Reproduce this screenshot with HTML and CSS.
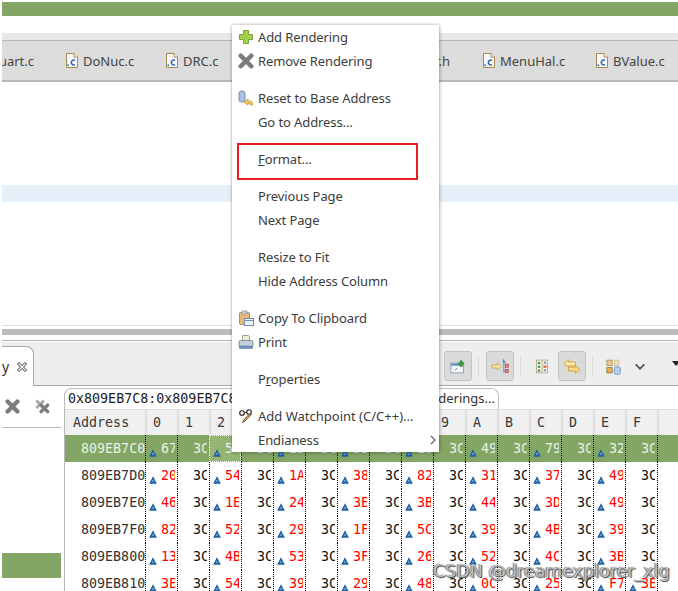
FILE: index.html
```html
<!DOCTYPE html>
<html lang="en">
<head>
<meta charset="utf-8">
<title>Memory rendering menu</title>
<link rel="stylesheet" href="styles.css">
</head>
<body>
<svg class="defs" width="0" height="0" aria-hidden="true">
  <symbol id="file-c" viewBox="0 0 12 15">
    <path d="M.5.5h7.500l3.500 3.500v10.500h-11z" fill="#f4f8fc" stroke="#a58a4c"/>
    <path d="M8 .5v3.500h3.500" fill="#fff" stroke="#a58a4c"/>
    <rect x="1.500" y="11.500" width="1.500" height="1.500" fill="#2a62a5"/>
    <path d="M9 7.300a2.500 2.500 0 1 0 0 4.400" fill="none" stroke="#2a62a5" stroke-width="1.500"/>
  </symbol>
  <symbol id="tri" viewBox="0 0 8 8">
    <path d="M4 .2 7.900 7.800H.1z" fill="#1f62a4"/>
    <path d="M4 3.400 5.100 5.600H2.900z" fill="#a9c6e2"/>
  </symbol>
  <symbol id="x-gray" viewBox="0 0 14 14">
    <path d="M2.400 2.400 11.600 11.600M11.600 2.400 2.400 11.600" stroke="#7b7b7b" stroke-width="4" stroke-linecap="round"/>
  </symbol>
</svg>

<div class="app">
  <div class="title-bar"></div>

  <div class="tabstrip">
    <div class="tab tab-first"><span class="tab-label">Guart.c</span></div>
    <div class="tab"><svg class="file-icon"><use href="#file-c"/></svg><span class="tab-label">DoNuc.c</span></div>
    <div class="tab"><svg class="file-icon"><use href="#file-c"/></svg><span class="tab-label">DRC.c</span></div>
    <div class="tab tab-hidden"><svg class="file-icon"><use href="#file-c"/></svg><span class="tab-label">Some.c</span></div>
    <div class="tab tab-clipped"><span class="tab-label">Timer.h</span></div>
    <div class="tab"><svg class="file-icon"><use href="#file-c"/></svg><span class="tab-label">MenuHal.c</span></div>
    <div class="tab"><svg class="file-icon"><use href="#file-c"/></svg><span class="tab-label">BValue.c</span></div>
  </div>

  <div class="editor"><div class="current-line"></div></div>

  <div class="sash"><div class="sash-bar"></div></div>

  <div class="view-head">
    <div class="view-tab">
      <span class="view-title">y</span>
      <svg class="close-icon" viewBox="0 0 12 12"><path d="M1.500 3 3 1.500 6 4.500 9 1.500 10.500 3 7.500 6 10.500 9 9 10.500 6 7.500 3 10.500 1.500 9 4.500 6z" fill="#fff" stroke="#333"/></svg>
    </div>
    <div class="view-tools">
      <div class="tool tool-on">
        <svg class="tool-icon" viewBox="0 0 24 22"><rect x="2.500" y="6.500" width="17" height="13" fill="#f3f6f8" stroke="#7c8a92"/><rect x="3" y="7" width="16" height="3" fill="#5d93c8"/><path d="M16 2l5 5-2 1-1 3-2 1-5-5 2-1 2-3z" fill="#3f9a3f"/><path d="M11 13l-3 3" stroke="#3f7a3f"/></svg>
      </div>
      <span class="tool-sep"></span>
      <div class="tool tool-on">
        <svg class="tool-icon" viewBox="0 0 24 22"><path d="M1.500 9h7V6l5 5-5 5v-3h-7z" fill="#f6e6a8" stroke="#c8a03c"/><path d="M17 1v18M17 6h3M17 17h3" stroke="#4a7fb0" fill="none"/><path d="M15 5l2-3 2 3z" fill="#4a7fb0"/><rect x="19" y="8" width="4" height="4" fill="#e68d8d" stroke="#b44"/><rect x="19" y="15" width="4" height="4" fill="#e68d8d" stroke="#b44"/></svg>
      </div>
      <span class="tool-sep"></span>
      <div class="tool">
        <svg class="tool-icon" viewBox="0 0 24 22"><rect x="4.500" y="2.500" width="15" height="17" fill="#f4f2e4" stroke="#a8a078"/><path d="M12 3v16" stroke="#a8a078"/><rect x="6.500" y="5" width="3" height="3" fill="#3f9a5f"/><rect x="6.500" y="10" width="3" height="3" fill="#3f9a5f"/><rect x="6.500" y="15" width="3" height="3" fill="#3f9a5f"/><path d="M14 7l2-3 2 3zM14 15l2 3 2-3z" fill="#4a7fb0"/><rect x="14" y="9.500" width="4" height="3.500" fill="#e86a5a"/></svg>
      </div>
      <div class="tool tool-on tool-push">
        <svg class="tool-icon" viewBox="0 0 24 22"><path d="M1.500 7l6-5v3h9v5h-9v2z" fill="#fbe9b0" stroke="#cf9414"/><path d="M22.500 15l-6 5v-3h-9v-5h9v-2z" fill="#fbdb84" stroke="#cf9414"/></svg>
      </div>
      <span class="tool-sep"></span>
      <div class="tool">
        <svg class="tool-icon" viewBox="0 0 24 22"><rect x="2.500" y="2.500" width="7" height="7" fill="#f1c986" stroke="#9c8a5c"/><rect x="12.500" y="2.500" width="6" height="7" fill="#f1dfb4" stroke="#c8bc94"/><rect x="2.500" y="12.500" width="7" height="7" fill="#efb14c" stroke="#7c6a3c"/><rect x="12.500" y="11.500" width="8" height="10" rx="2.500" fill="#b7cfe9" stroke="#5d88b9"/></svg>
      </div>
      <svg class="chevron" viewBox="0 0 12 8"><path d="M1 1.500 6 6.500 11 1.500" fill="none" stroke="#555" stroke-width="2"/></svg>
      <svg class="view-menu" viewBox="0 0 8 5"><path d="M0 0h8L4 5z" fill="#222"/></svg>
    </div>
  </div>

  <div class="lower">
    <div class="side">
      <div class="side-tools">
        <svg class="side-icon"><use href="#x-gray"/></svg>
        <svg class="side-icon" viewBox="0 0 16 16"><path d="M1.500 1.500 9.500 9.500M9.500 1.500 1.500 9.500" stroke="#a8a8a8" stroke-width="3" fill="none"/><path d="M6.500 6.500 13.500 13.500M13.500 6.500 6.500 13.500" stroke="#7b7b7b" stroke-width="3.600" stroke-linecap="round"/></svg>
      </div>
      <div class="side-selected"></div>
    </div>

    <div class="memory">
      <div class="mem-tabs">
        <div class="mem-tab"><span class="mono">0x809EB7C8:0x809EB7C8 &lt;Traditional&gt;</span></div>
        <div class="mem-new">New Renderings...</div>
      </div>

      <div class="row head">
        <span class="h addr">Address</span><span class="h">0</span><span class="h">1</span><span class="h">2</span><span class="h">3</span><span class="h">4</span><span class="h">5</span><span class="h">6</span><span class="h">7</span><span class="h">8</span><span class="h">9</span><span class="h">A</span><span class="h">B</span><span class="h">C</span><span class="h">D</span><span class="h">E</span><span class="h">F</span><span class="h h-end"></span>
      </div>

      <div class="row sel">
        <span class="a">809EB7C0</span>
        <span class="c"><svg class="t"><use href="#tri"/></svg><b>67</b></span><span class="c"><b>3C</b></span>
        <span class="c cur"><svg class="t"><use href="#tri"/></svg><b>54</b></span><span class="c"><b>3C</b></span>
        <span class="c"><svg class="t"><use href="#tri"/></svg><b>23</b></span><span class="c"><b>3C</b></span>
        <span class="c"><svg class="t"><use href="#tri"/></svg><b>33</b></span><span class="c"><b>3C</b></span>
        <span class="c"><svg class="t"><use href="#tri"/></svg><b>18</b></span><span class="c"><b>3C</b></span>
        <span class="c"><svg class="t"><use href="#tri"/></svg><b>49</b></span><span class="c"><b>3C</b></span>
        <span class="c"><svg class="t"><use href="#tri"/></svg><b>79</b></span><span class="c"><b>3C</b></span>
        <span class="c"><svg class="t"><use href="#tri"/></svg><b>32</b></span><span class="c"><b>3C</b></span>
      </div>
      <div class="row">
        <span class="a">809EB7D0</span>
        <span class="c v"><svg class="t"><use href="#tri"/></svg><b>20</b></span><span class="c"><b>3C</b></span>
        <span class="c v"><svg class="t"><use href="#tri"/></svg><b>54</b></span><span class="c"><b>3C</b></span>
        <span class="c v"><svg class="t"><use href="#tri"/></svg><b>1A</b></span><span class="c"><b>3C</b></span>
        <span class="c v"><svg class="t"><use href="#tri"/></svg><b>38</b></span><span class="c"><b>3C</b></span>
        <span class="c v"><svg class="t"><use href="#tri"/></svg><b>82</b></span><span class="c"><b>3C</b></span>
        <span class="c v"><svg class="t"><use href="#tri"/></svg><b>31</b></span><span class="c"><b>3C</b></span>
        <span class="c v"><svg class="t"><use href="#tri"/></svg><b>37</b></span><span class="c"><b>3C</b></span>
        <span class="c v"><svg class="t"><use href="#tri"/></svg><b>49</b></span><span class="c"><b>3C</b></span>
      </div>
      <div class="row">
        <span class="a">809EB7E0</span>
        <span class="c v"><svg class="t"><use href="#tri"/></svg><b>46</b></span><span class="c"><b>3C</b></span>
        <span class="c v"><svg class="t"><use href="#tri"/></svg><b>1E</b></span><span class="c"><b>3C</b></span>
        <span class="c v"><svg class="t"><use href="#tri"/></svg><b>24</b></span><span class="c"><b>3C</b></span>
        <span class="c v"><svg class="t"><use href="#tri"/></svg><b>3E</b></span><span class="c"><b>3C</b></span>
        <span class="c v"><svg class="t"><use href="#tri"/></svg><b>3B</b></span><span class="c"><b>3C</b></span>
        <span class="c v"><svg class="t"><use href="#tri"/></svg><b>44</b></span><span class="c"><b>3C</b></span>
        <span class="c v"><svg class="t"><use href="#tri"/></svg><b>3D</b></span><span class="c"><b>3C</b></span>
        <span class="c v"><svg class="t"><use href="#tri"/></svg><b>49</b></span><span class="c"><b>3C</b></span>
      </div>
      <div class="row">
        <span class="a">809EB7F0</span>
        <span class="c v"><svg class="t"><use href="#tri"/></svg><b>82</b></span><span class="c"><b>3C</b></span>
        <span class="c v"><svg class="t"><use href="#tri"/></svg><b>52</b></span><span class="c"><b>3C</b></span>
        <span class="c v"><svg class="t"><use href="#tri"/></svg><b>29</b></span><span class="c"><b>3C</b></span>
        <span class="c v"><svg class="t"><use href="#tri"/></svg><b>1F</b></span><span class="c"><b>3C</b></span>
        <span class="c v"><svg class="t"><use href="#tri"/></svg><b>5C</b></span><span class="c"><b>3C</b></span>
        <span class="c v"><svg class="t"><use href="#tri"/></svg><b>39</b></span><span class="c"><b>3C</b></span>
        <span class="c v"><svg class="t"><use href="#tri"/></svg><b>4B</b></span><span class="c"><b>3C</b></span>
        <span class="c v"><svg class="t"><use href="#tri"/></svg><b>39</b></span><span class="c"><b>3C</b></span>
      </div>
      <div class="row">
        <span class="a">809EB800</span>
        <span class="c v"><svg class="t"><use href="#tri"/></svg><b>13</b></span><span class="c"><b>3C</b></span>
        <span class="c v"><svg class="t"><use href="#tri"/></svg><b>4B</b></span><span class="c"><b>3C</b></span>
        <span class="c v"><svg class="t"><use href="#tri"/></svg><b>53</b></span><span class="c"><b>3C</b></span>
        <span class="c v"><svg class="t"><use href="#tri"/></svg><b>3F</b></span><span class="c"><b>3C</b></span>
        <span class="c v"><svg class="t"><use href="#tri"/></svg><b>26</b></span><span class="c"><b>3C</b></span>
        <span class="c v"><svg class="t"><use href="#tri"/></svg><b>52</b></span><span class="c"><b>3C</b></span>
        <span class="c v"><svg class="t"><use href="#tri"/></svg><b>4C</b></span><span class="c"><b>3C</b></span>
        <span class="c v"><svg class="t"><use href="#tri"/></svg><b>3B</b></span><span class="c"><b>3C</b></span>
      </div>
      <div class="row">
        <span class="a">809EB810</span>
        <span class="c v"><svg class="t"><use href="#tri"/></svg><b>3E</b></span><span class="c"><b>3C</b></span>
        <span class="c v"><svg class="t"><use href="#tri"/></svg><b>54</b></span><span class="c"><b>3C</b></span>
        <span class="c v"><svg class="t"><use href="#tri"/></svg><b>39</b></span><span class="c"><b>3C</b></span>
        <span class="c v"><svg class="t"><use href="#tri"/></svg><b>29</b></span><span class="c"><b>3C</b></span>
        <span class="c v"><svg class="t"><use href="#tri"/></svg><b>48</b></span><span class="c"><b>3C</b></span>
        <span class="c v"><svg class="t"><use href="#tri"/></svg><b>0C</b></span><span class="c"><b>3C</b></span>
        <span class="c v"><svg class="t"><use href="#tri"/></svg><b>25</b></span><span class="c"><b>3C</b></span>
        <span class="c v"><svg class="t"><use href="#tri"/></svg><b>F7</b></span><span class="c v"><svg class="t"><use href="#tri"/></svg><b>3E</b></span>
      </div>
    </div>
  </div>
</div>

<div class="menu">
  <div class="item"><svg class="mi" viewBox="0 0 16 16"><path d="M5.500 1.500h5v4h4v5h-4v4h-5v-4h-4v-5h4z" fill="#a3d04e" stroke="#7da33c"/></svg><span>Add Rendering</span></div>
  <div class="item"><svg class="mi"><use href="#x-gray"/></svg><span>Remove Rendering</span></div>
  <div class="gap"></div>
  <div class="item"><svg class="mi" viewBox="0 0 16 16"><rect x="1" y="1" width="6" height="11" rx="2.500" fill="#a9c0e0" stroke="#6f8cb5"/><path d="M6 12l4-3v2h3q2 1 1.500 4h-2q0-2-2.500-2v2z" fill="#f4c95c" stroke="#c99a2e" stroke-width=".8"/></svg><span>Reset to Base Address</span></div>
  <div class="item"><span class="noicon">Go to Address...</span></div>
  <div class="gap"></div>
  <div class="item"><span class="noicon"><u>F</u>ormat...</span></div>
  <div class="gap"></div>
  <div class="item"><span class="noicon">Previous Page</span></div>
  <div class="item"><span class="noicon">Next Page</span></div>
  <div class="gap"></div>
  <div class="item"><span class="noicon">Resize to Fit</span></div>
  <div class="item"><span class="noicon">Hide Address Column</span></div>
  <div class="gap"></div>
  <div class="item"><svg class="mi" viewBox="0 0 16 16"><rect x="1.500" y="2.500" width="10" height="12" rx="1" fill="#e8b877" stroke="#b98c52"/><rect x="4" y="1" width="5" height="3" fill="#c9d3dc" stroke="#8796a3" stroke-width=".7"/><rect x="6.500" y="8.500" width="9" height="7" fill="#eaf1f8" stroke="#6f8fb2"/><path d="M7 10.500h8" stroke="#6f8fb2"/></svg><span>Copy To Clipboard</span></div>
  <div class="item"><svg class="mi" viewBox="0 0 16 16"><path d="M4.500 1.500h6l1 1.500v4h-7z" fill="#f3ecd8" stroke="#a7a08a"/><rect x="1" y="6.500" width="14" height="6" rx="1.500" fill="#c4cfdb" stroke="#7d8da0"/><rect x="1.500" y="12" width="13" height="2.500" fill="#6f93bd" stroke="#5d7fa8" stroke-width=".6"/></svg><span>Print</span></div>
  <div class="gap"></div>
  <div class="item"><span class="noicon">P<u>r</u>operties</span></div>
  <div class="gap"></div>
  <div class="item"><svg class="mi" viewBox="0 0 16 16"><circle cx="4" cy="5" r="2.300" fill="none" stroke="#222" stroke-width="1.100"/><circle cx="11" cy="4" r="2.300" fill="none" stroke="#222" stroke-width="1.100"/><path d="M6 5l3-1" stroke="#222"/><path d="M13.500 6.500 7 13l-2.500 1.500L5.500 12 12 5.500z" fill="#e8a34c" stroke="#4a3a20" stroke-width=".8"/></svg><span class="wide">Add Watchpoint (C/C++)...</span></div>
  <div class="item item-sub"><span class="noicon">Endianess</span><svg class="sub-arrow" viewBox="0 0 6 10"><path d="M1 1l4 4-4 4" fill="none" stroke="#666" stroke-width="1.300"/></svg></div>
  <div class="highlight"></div>
</div>

<div class="watermark">CSDN @dreamexplorer_xlg</div>
</body>
</html>
```
FILE: styles.css
```css
* { box-sizing: border-box; }
html, body { margin: 0; height: 591px; overflow: hidden; background: #fff; }
body { position: relative; font-family: "Noto Sans", sans-serif; font-size: 13px; color: #3c3c3c; }
.defs { position: absolute; }
.app { width: 678px; height: 591px; padding: 2px 0 0 2px; overflow: hidden; display: flex; flex-direction: column; }

.title-bar { height: 14px; background: #84a665; flex: none; margin-bottom: 17px; }

.tabstrip { height: 49px; flex: none; display: flex; align-items: center; padding-top: 8px; background: linear-gradient(#e9e9e9 0 7px, #b4b4b4 7px 8px, #dcdcdc 8px); border-bottom: 2px solid #b9b9b9; overflow: hidden; white-space: nowrap; }
.tab { flex: none; display: flex; align-items: center; gap: 5px; color: #444; }
.tab-first { width: 72px; margin-left: -8px; justify-content: flex-end; padding-right: 32px; }
.file-icon { width: 12px; height: 15px; flex: none; }
.tab:nth-child(2) { width: 100px; }
.tab:nth-child(3) { width: 100px; }
.tab-hidden { width: 100px; }
.tab-clipped { width: 117px; justify-content: flex-end; padding-right: 33px; }
.tab:nth-child(6) { width: 113px; }

.editor { height: 243px; flex: none; padding-top: 103px; }
.current-line { height: 17px; background: #e6f0fb; }

.sash { height: 15px; flex: none; border-top: 1px solid #e0e0e0; padding-top: 3px; }
.sash-bar { height: 6px; background: #bcbcbc; }

.view-head { height: 46px; flex: none; display: flex; align-items: flex-end; background: #eeeeee; border-top: 1px solid #b0b0b0; border-bottom: 1px solid #a8a8a8; box-shadow: inset 0 1px 0 #fff; }
.view-tab { width: 32px; height: 40px; margin-bottom: -1px; background: #fff; border: 1px solid #a8a8a8; border-width: 1px 1px 0 0; border-top-right-radius: 8px; display: flex; align-items: center; gap: 7px; color: #333; font-size: 14px; flex: none; }
.close-icon { width: 12px; height: 12px; flex: none; }
.view-tools { flex: 1; display: flex; align-items: center; height: 44px; padding: 6px 0 0 410px; }
.tool { width: 28px; height: 30px; flex: none; display: flex; align-items: center; justify-content: center; border: 1px solid transparent; border-radius: 3px; }
.tool-on { background: #dadada; border-color: #c2c2c2; }
.tool-push { margin-left: 2px; }
.tool-icon { width: 18px; height: 17px; }
.tool-sep { width: 1px; height: 20px; margin: 0 7px 0 6px; background: #dcdcdc; flex: none; }
.chevron { width: 12px; height: 7px; margin-left: 6px; flex: none; }
.view-menu { width: 8px; height: 5px; margin-left: 26px; margin-bottom: 6px; flex: none; }

.lower { flex: 1; display: flex; min-height: 0; }
.side { width: 59px; flex: none; margin-right: 3px; }
.side-tools { height: 42px; border-bottom: 1px solid #b8b8b8; display: flex; align-items: center; gap: 15px; padding-left: 3px; }
.side-icon { width: 15px; height: 15px; flex: none; }
.side-selected { height: 25px; margin-top: 125px; background: #84a665; }

.memory { flex: 1; margin-top: 2px; min-width: 0; border-left: 1px solid #b8b8b8; border-image: linear-gradient(transparent 6px, #b8b8b8 6px) 1; }
.mem-tabs { height: 21px; margin-left: -1px; display: flex; justify-content: space-between; width: 435px; background: #fff; border: 1px solid #bdbdbd; border-bottom: 0; border-radius: 7px 8px 0 0; padding: 0 3px; line-height: 19px; white-space: nowrap; overflow: hidden; color: #222; }
.mono { font-family: "DejaVu Sans Mono", monospace; font-size: 13.330px; }
.mem-new { color: #333; background: #fff; padding-left: 3px; }

.row { height: 27px; display: flex; align-items: center; font-family: "DejaVu Sans Mono", monospace; font-size: 13.330px; color: #333; white-space: nowrap; }
.head { height: 26px; background: #f0f0f0; border-top: 1px solid #dcdcdc; color: #3a3a3a; }
.h { width: 32px; height: 25px; line-height: 25px; padding-left: 6px; border-left: 2px solid #dedede; flex: none; }
.h.addr { width: 80px; padding-left: 8px; border-left: 0; }
.a { width: 80px; padding-left: 16px; flex: none; }
.c { width: 32px; height: 27px; flex: none; display: block; position: relative; border-left: 1px dotted #000; overflow: hidden; line-height: 27px; }
.c:nth-child(17) { border-right: 1px dotted #000; width: 33px; }
.c b { font-weight: 400; position: absolute; left: 15px; width: 14px; overflow: hidden; color: #111; }
.c.v b { color: #f00; }
.t { position: absolute; left: 3px; top: 14px; width: 8px; height: 8px; }
.sel { background: #84a665; color: #e8f2e0; }
.sel .c b { color: #e8f2e0; }
.sel .cur { background: #95b575; outline: 1px dotted #fff; outline-offset: -1px; }

.menu { position: absolute; left: 232px; top: 25px; width: 207px; background: #fff; box-shadow: 0 0 3px rgba(0,0,0,.3), 1px 1px 4px rgba(0,0,0,.15); color: #3c3c3c; letter-spacing: -.1px; }
.item { height: 24px; display: flex; align-items: center; padding-left: 6px; gap: 4px; white-space: nowrap; }
.item-sub { justify-content: space-between; padding-right: 3px; }
.mi { width: 16px; height: 16px; flex: none; }
.noicon { margin-left: 20px; }
.wide { letter-spacing: 0; }
.gap { height: 13px; }
.sub-arrow { width: 6px; height: 10px; }
.highlight { position: absolute; left: 5px; top: 118px; width: 181px; height: 37px; border: 2px solid #ed1c24; }

.watermark { position: absolute; left: 433px; top: 561px; font-family: "DejaVu Sans", sans-serif; font-size: 17.500px; color: rgba(215,215,215,.75); text-shadow: 1px 1px 1px #444, -1px 0 1px #777; white-space: nowrap; }
```
